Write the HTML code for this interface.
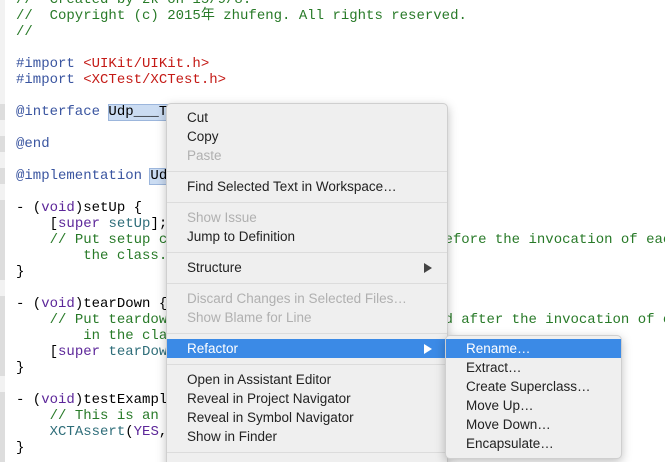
<!DOCTYPE html>
<html style="overflow:hidden;width:665px;height:462px"><head><meta charset="utf-8"><style>
body{margin:0;width:665px;height:462px;overflow:hidden;background:#fff;position:relative;font-family:"Liberation Sans",sans-serif}
pre{position:absolute;left:16px;top:-8px;margin:0;font:14px/16px "Liberation Mono","Noto Sans CJK SC",monospace;color:#000}
.c{color:#287a28}.k{color:#9b2393}.p{color:#643820}.s{color:#c41a16}.b{color:#3a55a0}.m{color:#2e6d79}.v{color:#5c2699}
.gut{position:absolute;left:0;width:5px;background:#e6e6e6}
.sel{position:absolute;background:#cbdcf2;border:1px solid #9cb6dc}
.menu{position:absolute;left:166px;top:103px;width:280px;height:380px;background:#efefef;border:1px solid #cfcfcf;border-radius:5px;box-shadow:0 3px 10px rgba(0,0,0,.25);font-size:13.5px;color:#222}
.it{position:absolute;left:20px;height:19px;line-height:19px;white-space:nowrap}
.dis{color:#b0b0b0}
.sep{position:absolute;left:0;right:0;height:1px;background:#dcdcdc}
.hl{position:absolute;left:0;right:0;height:19px;background:#3b8ae6}
.arr{position:absolute;left:257px;width:0;height:0;border-left:8px solid #444;border-top:5px solid transparent;border-bottom:5px solid transparent}
.sub{position:absolute;left:445px;top:335px;width:175px;height:122px;background:#efefef;border:1px solid #cfcfcf;border-radius:5px;box-shadow:0 3px 10px rgba(0,0,0,.25);font-size:13.5px;color:#222}
</style></head><body>
<div class="gut" style="top:0;height:462px;background:#f2f2f2"></div>
<div class="gut" style="top:104px;height:16px;background:#ddd"></div>
<div class="gut" style="top:136px;height:16px;background:#ddd"></div>
<div class="gut" style="top:168px;height:16px;background:#ddd"></div>
<div class="gut" style="top:200px;height:80px;background:#ddd"></div>
<div class="gut" style="top:296px;height:80px;background:#ddd"></div>
<div class="gut" style="top:392px;height:70px;background:#ddd"></div>
<div class="sel" style="left:108px;top:104px;width:58px;height:15px"></div>
<div class="sel" style="left:149px;top:168px;width:17px;height:15px"></div>
<pre><span class="c">//  Created by zk on 15/9/8.
//  Copyright (c) 2015年 zhufeng. All rights reserved.
//</span>

<span class="b">#import</span> <span class="s">&lt;UIKit/UIKit.h&gt;</span>
<span class="b">#import</span> <span class="s">&lt;XCTest/XCTest.h&gt;</span>

<span class="b">@interface</span> Udp___T

<span class="b">@end</span>

<span class="b">@implementation</span> Ud

- (<span class="v">void</span>)setUp {
    [<span class="v">super</span> <span class="m">setUp</span>];
    <span class="c">// Put setup code here. This method is called before the invocation of each
        the class.</span>
}

- (<span class="v">void</span>)tearDown {
    <span class="c">// Put teardown code here. This method is called after the invocation of each
        in the cla</span>
    [<span class="v">super</span> <span class="m">tearDow</span>
}

- (<span class="v">void</span>)testExampl
    <span class="c">// This is an</span>
    <span class="m">XCTAssert</span>(<span class="v">YES</span>,
}</pre>
<div class="menu">
<div class="it" style="top:4px">Cut</div>
<div class="it" style="top:23px">Copy</div>
<div class="it dis" style="top:42px">Paste</div>
<div class="sep" style="top:67px"></div>
<div class="it" style="top:73px">Find Selected Text in Workspace…</div>
<div class="sep" style="top:98px"></div>
<div class="it dis" style="top:104px">Show Issue</div>
<div class="it" style="top:123px">Jump to Definition</div>
<div class="sep" style="top:148px"></div>
<div class="it" style="top:154px">Structure</div>
<div class="arr" style="top:159px"></div>
<div class="sep" style="top:179px"></div>
<div class="it dis" style="top:185px">Discard Changes in Selected Files…</div>
<div class="it dis" style="top:204px">Show Blame for Line</div>
<div class="sep" style="top:229px"></div>
<div class="hl" style="top:235px"></div>
<div class="it" style="top:235px;color:#fff">Refactor</div>
<div class="arr" style="top:240px;border-left-color:#fff"></div>
<div class="sep" style="top:260px"></div>
<div class="it" style="top:266px">Open in Assistant Editor</div>
<div class="it" style="top:285px">Reveal in Project Navigator</div>
<div class="it" style="top:304px">Reveal in Symbol Navigator</div>
<div class="it" style="top:323px">Show in Finder</div>
<div class="sep" style="top:348px"></div>
</div>
<div class="sub">
<div class="hl" style="top:3px"></div>
<div class="it" style="top:3px;color:#fff">Rename…</div>
<div class="it" style="top:22px">Extract…</div>
<div class="it" style="top:41px">Create Superclass…</div>
<div class="it" style="top:60px">Move Up…</div>
<div class="it" style="top:79px">Move Down…</div>
<div class="it" style="top:98px">Encapsulate…</div>
</div>
</body></html>
